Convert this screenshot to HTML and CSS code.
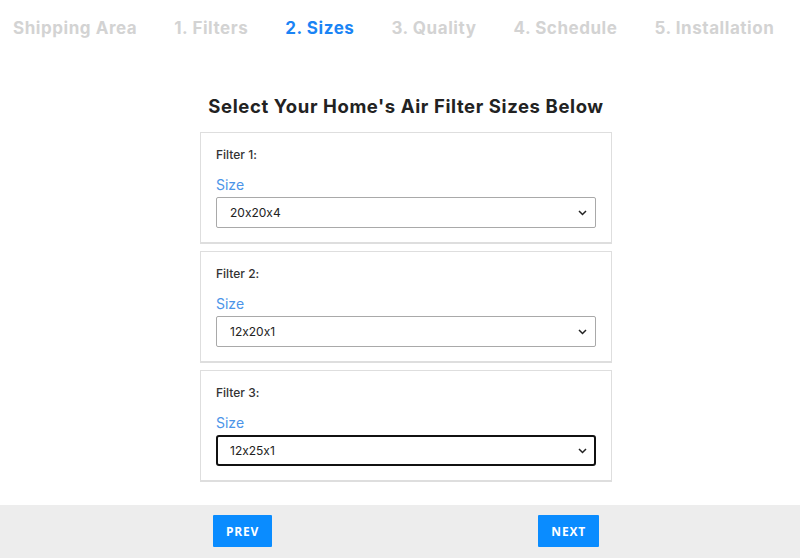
FILE: index.html
```html
<!DOCTYPE html>
<html>
<head>
<meta charset="utf-8">
<link rel="stylesheet" href="styles.css">
</head>
<body>
<div class="page">
  <nav class="steps">
    <span class="step">Shipping Area</span>
    <span class="step">1. Filters</span>
    <span class="step active">2. Sizes</span>
    <span class="step">3. Quality</span>
    <span class="step">4. Schedule</span>
    <span class="step">5. Installation</span>
  </nav>
  <main class="content">
    <h1 class="title">Select Your Home's Air Filter Sizes Below</h1>
    <div class="cards">
      <section class="card">
        <div class="card-label">Filter 1:</div>
        <div class="field-label">Size</div>
        <div class="select"><span>20x20x4</span><svg class="chev" width="9" height="6" viewBox="0 0 9 6"><path d="M1 1l3.5 3.5L8 1" fill="none" stroke="#222" stroke-width="1.5"/></svg></div>
      </section>
      <section class="card">
        <div class="card-label">Filter 2:</div>
        <div class="field-label">Size</div>
        <div class="select"><span>12x20x1</span><svg class="chev" width="9" height="6" viewBox="0 0 9 6"><path d="M1 1l3.5 3.5L8 1" fill="none" stroke="#222" stroke-width="1.5"/></svg></div>
      </section>
      <section class="card">
        <div class="card-label">Filter 3:</div>
        <div class="field-label">Size</div>
        <div class="select focused"><span>12x25x1</span><svg class="chev" width="9" height="6" viewBox="0 0 9 6"><path d="M1 1l3.5 3.5L8 1" fill="none" stroke="#222" stroke-width="1.5"/></svg></div>
      </section>
    </div>
  </main>
  <footer class="footer">
    <button class="btn">PREV</button>
    <button class="btn">NEXT</button>
  </footer>
</div>
</body>
</html>
```

FILE: styles.css
```css
* { box-sizing: border-box; }
html, body { margin: 0; padding: 0; background: #fff; }
body {
  font-family: "Inter", "Open Sans", sans-serif;
  font-feature-settings: "calt" 0;
  width: 800px;
  height: 558px;
  overflow: hidden;
}
.page { display: flex; flex-direction: column; height: 558px; }
.steps {
  display: flex;
  gap: 37px;
  padding: 17px 0 0 13px;
  height: 40px;
}
.step {
  font-size: 17px;
  font-weight: 700;
  color: #d3d3d3;
  letter-spacing: 0.55px;
  line-height: 22px;
  white-space: nowrap;
}
.step.active { color: #1a84f5; }
.content {
  flex: 1;
  display: flex;
  flex-direction: column;
  align-items: center;
  padding: 54px 0 0 12px;
}
.title {
  margin: 0 0 14px;
  font-size: 18.5px;
  font-weight: 700;
  color: #222;
  letter-spacing: 0.6px;
  line-height: 24px;
}
.cards { display: flex; flex-direction: column; gap: 7px; width: 412px; }
.card {
  border: 1px solid #dedede;
  border-bottom-width: 2px;
  padding: 14px 15px 14px;
  height: 112px;
}
.card-label { font-size: 12px; color: #333; line-height: 16px; font-weight: 500; }
.field-label { margin-top: 13px; font-size: 14px; color: #4b94e8; line-height: 18px; }
.select {
  margin-top: 3px;
  height: 31px;
  border: 1px solid #a9a9a9;
  border-radius: 2px;
  display: flex;
  align-items: center;
  justify-content: space-between;
  padding: 0 8px 0 13px;
  font-size: 12px;
  color: #222;
}
.select.focused { border: 2px solid #111; border-radius: 3px; padding-left: 12px; padding-right: 7px; }
.footer {
  height: 53px;
  background: #ededed;
  display: flex;
  justify-content: space-between;
  align-items: center;
  padding: 0 201px 0 213px;
}
.btn {
  border: none;
  background: #0a8cff;
  color: #fff;
  font-family: "Open Sans", sans-serif;
  font-weight: 700;
  font-size: 12px;
  letter-spacing: 0.8px;
  height: 32px;
  padding: 0 13px;
  border-radius: 1px;
  margin-top: -1px;
}
```
